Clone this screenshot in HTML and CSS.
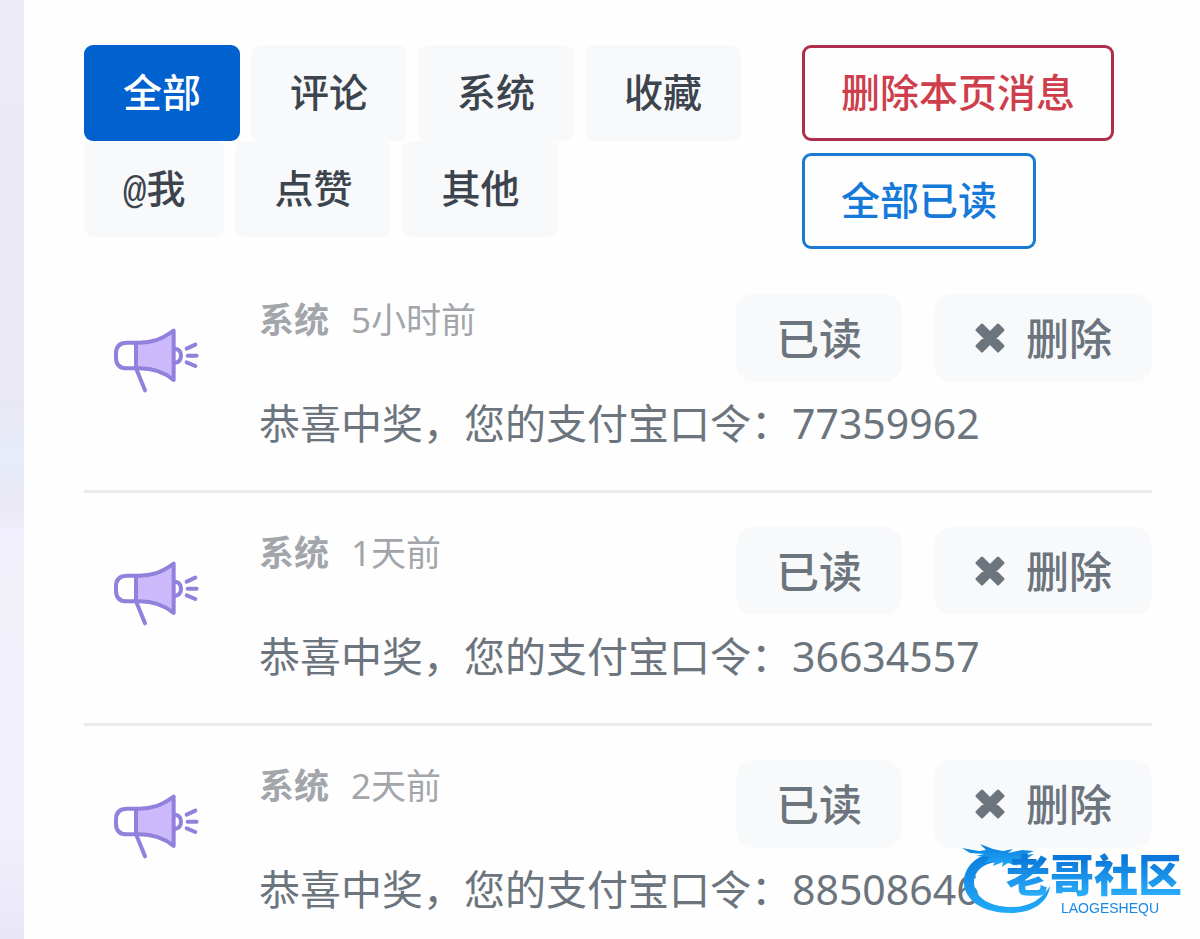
FILE: index.html
```html
<!DOCTYPE html>
<html lang="zh-CN">
<head>
  <meta charset="UTF-8" />
  <meta name="viewport" content="width=device-width, initial-scale=1.0"/>
  <title>消息中心</title>
  <link rel="stylesheet" href="styles.css">
</head>
<body>

<!-- 公用图标 -->
<svg class="sprite" aria-hidden="true">
  <symbol id="horn" viewBox="39 54 258 195">
    <path d="M108 98C155 100 185 88 221 62V210C190 184 155 173 108 175Z" fill="#cbb9fb"/>
    <g fill="none" stroke="#9181dd" stroke-width="12" stroke-linecap="round" stroke-linejoin="round">
      <path d="M108 98C155 100 185 88 221 62V210C190 184 155 173 108 175Z"/>
      <path d="M108 98H82Q48 98 48 130V143Q48 175 82 175H108"/>
      <path d="M109 177L135 241"/>
      <path d="M226 116Q243 119 243 137T226 158"/>
      <path d="M260 116L286 104M263 137H290M260 157L286 168"/>
    </g>
  </symbol>
  <symbol id="times" viewBox="0 0 32 32">
    <path d="M8 3L16 11L24 3L29 8L21 16L29 24L24 29L16 21L8 29L3 24L11 16L3 8Z" fill="#6c757d" stroke="#6c757d" stroke-width="3" stroke-linejoin="round"/>
  </symbol>
</svg>

<main class="panel">
  <div class="toolbar">
    <nav class="tabs">
      <button class="tab active">全部</button>
      <button class="tab">评论</button>
      <button class="tab">系统</button>
      <button class="tab">收藏</button>
      <button class="tab">@我</button>
      <button class="tab">点赞</button>
      <button class="tab">其他</button>
    </nav>
    <div class="actions">
      <button class="btn-outline danger">删除本页消息</button>
      <button class="btn-outline primary">全部已读</button>
    </div>
  </div>

  <!-- 消息列表 -->
  <ul class="messages">
    <li class="message">
      <svg class="horn" aria-hidden="true"><use href="#horn"/></svg>
      <div class="content">
        <div class="head">
          <p class="meta"><strong>系统</strong><span>5小时前</span></p>
          <button class="btn-light">已读</button>
          <button class="btn-light"><svg class="times" aria-hidden="true"><use href="#times"/></svg>删除</button>
        </div>
        <p class="text">恭喜中奖，您的支付宝口令：77359962</p>
      </div>
    </li>
    <li class="message">
      <svg class="horn" aria-hidden="true"><use href="#horn"/></svg>
      <div class="content">
        <div class="head">
          <p class="meta"><strong>系统</strong><span>1天前</span></p>
          <button class="btn-light">已读</button>
          <button class="btn-light"><svg class="times" aria-hidden="true"><use href="#times"/></svg>删除</button>
        </div>
        <p class="text">恭喜中奖，您的支付宝口令：36634557</p>
      </div>
    </li>
    <li class="message">
      <svg class="horn" aria-hidden="true"><use href="#horn"/></svg>
      <div class="content">
        <div class="head">
          <p class="meta"><strong>系统</strong><span>2天前</span></p>
          <button class="btn-light">已读</button>
          <button class="btn-light"><svg class="times" aria-hidden="true"><use href="#times"/></svg>删除</button>
        </div>
        <p class="text">恭喜中奖，您的支付宝口令：88508646</p>
      </div>
    </li>
  </ul>
</main>

<!-- 右下角社区标志 -->
<div class="brand">
  <svg class="dragon" viewBox="0 0 90 72" aria-hidden="true">
    <defs>
      <linearGradient id="blue" x1="0" y1="0" x2="0" y2="1">
        <stop offset="0" stop-color="#0b7ddd"/>
        <stop offset="1" stop-color="#22aaf8"/>
      </linearGradient>
    </defs>
    <g fill="url(#blue)">
      <path d="M34 9C14 12 2 24 2 39C2 58 22 70 48 70C70 70 86 60 88 43C80 56 68 64 50 64C27 64 12 54 12 39C12 29 20 21 34 19Z"/>
      <path d="M0 5L17 8L24 7L18 1L31 6L41 8L51 6L46 10L60 7L72 8L62 12L72 11L66 15L59 16L70 20L59 19L50 18L56 23L46 20L40 24L41 19L31 23L33 18L23 20L28 14L14 13L22 11L8 10Z"/>
    </g>
  </svg>
  <div class="brand-name">
    <span class="brand-cn">老哥社区</span>
    <span class="brand-en">LAOGESHEQU</span>
  </div>
</div>

</body>
</html>
```
FILE: styles.css
```css
* {
  box-sizing: border-box;
}
html, body {
  margin: 0;
  padding: 0;
  height: 100%;
  overflow: hidden;
}
body {
  padding-left: 24px;
  background: linear-gradient(to bottom, #eceaf7 0%, #e9e8f4 42%, #e6ecf8 49%, #e9e8f4 54%, #f2f0fe 57%, #f2f1f7 65%, #f2f0fd 70%, #f2f0fd 88%, #e9e7f5 100%);
  font-family: "Noto Sans", "Noto Sans CJK SC", sans-serif;
  color: #6c757d;
}
ul, p {
  margin: 0;
  padding: 0;
}
button {
  border: 0;
  font-family: "KaiTi", "Liberation Mono", "Noto Sans CJK SC", sans-serif;
  font-weight: 500;
  white-space: nowrap;
  cursor: pointer;
}
.sprite {
  position: absolute;
  width: 0;
  height: 0;
}
.panel {
  min-height: 100%;
  padding: 45px 48px 0 60px;
  background: #fefefe;
}

/* 顶部按钮 */
.toolbar {
  display: grid;
  grid-template-columns: 2fr 1fr;
  column-gap: 18px;
}
.tabs {
  display: flex;
  flex-wrap: wrap;
  align-content: flex-start;
  column-gap: 11px;
}
.tab {
  height: 96px;
  padding: 0 39px 6px;
  border-radius: 9px;
  background: #f8f9fb;
  color: #3c444d;
  font-size: 39px;
}
.tab.active {
  background: #0061cf;
  color: #fff;
}
.actions {
  display: flex;
  flex-direction: column;
  align-items: flex-start;
  gap: 12px;
}
.btn-outline {
  height: 96px;
  padding: 0 36px 6px;
  border: 3px solid;
  border-radius: 9px;
  background: transparent;
  font-size: 39px;
}
.btn-outline.danger {
  border-color: #ae2f4c;
  color: #cf3e4c;
}
.btn-outline.primary {
  border-color: #1a7ad2;
  color: #1479d8;
}

/* 消息 */
.messages {
  margin-top: 11px;
  list-style: none;
}
.message {
  display: flex;
  padding: 34px 0 36px 29px;
  border-bottom: 3px solid #ebebec;
}
.horn {
  flex: none;
  width: 86px;
  height: 65px;
  margin: 34px 60px 0 0;
}
.content {
  flex: 1;
}
.head {
  display: flex;
  gap: 32px;
}
.meta {
  display: flex;
  flex: 1;
  gap: 22px;
  color: #a2a6aa;
  font-size: 35px;
  line-height: 52px;
}
.btn-light {
  display: flex;
  align-items: center;
  gap: 20px;
  height: 88px;
  padding: 0 40px 4px;
  border-radius: 18px;
  background: #f8f9fb;
  color: #6c757d;
  font-size: 43px;
}
.times {
  width: 32px;
  height: 32px;
  margin-top: 4px;
}
.text {
  margin-top: 11px;
  padding-bottom: 1px;
  font-size: 41px;
  line-height: 60px;
}

/* 标志 */
.brand {
  position: fixed;
  right: 18px;
  bottom: 24px;
  display: flex;
  align-items: flex-end;
}
.dragon {
  width: 90px;
  height: 72px;
  margin-right: -46px;
}
.brand-name {
  display: flex;
  flex-direction: column;
  align-items: center;
  color: #1688e6;
}
.brand-cn {
  background: linear-gradient(to bottom, #0b78da 20%, #2aaefa 90%);
  background-clip: text;
  color: transparent;
  font-size: 44px;
  font-weight: 900;
  line-height: 52px;
}
.brand-en {
  padding-left: 32px;
  font-family: "Liberation Sans", sans-serif;
  font-size: 14px;
  line-height: 14px;
}
```
